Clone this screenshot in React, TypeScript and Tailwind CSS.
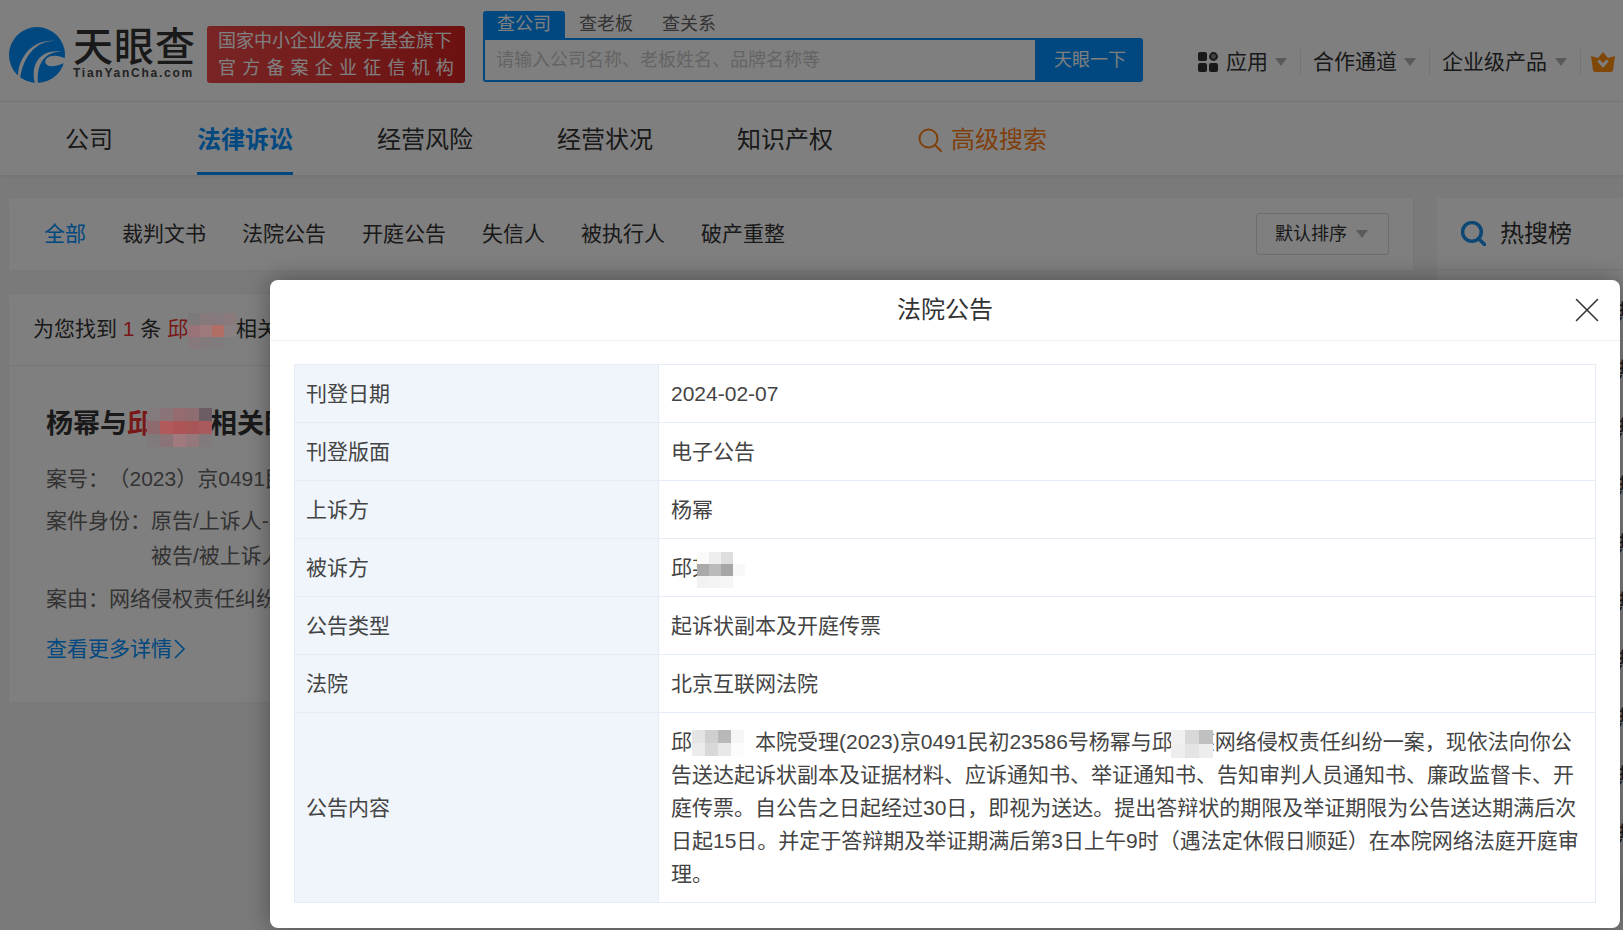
import React from 'react';
import { X } from 'lucide-react';

type MosaicProps = { x: number; y: number; size?: number; rows: string[][] };

// pixelated patches that hide names in the screenshot
const Mosaic: React.FC<MosaicProps> = ({ x, y, size = 12, rows }) => (
    <div className="absolute z-30" style={{ left: x, top: y }}>
        {rows.map((row, i) => (
            <div key={i} className="flex">
                {row.map((c, j) => (
                    <div key={j} style={{ width: size, height: size, background: c }} />
                ))}
            </div>
        ))}
    </div>
);

const Caret: React.FC<{ className?: string }> = ({ className }) => (
    <svg width="12" height="8" viewBox="0 0 12 8" className={className}>
        <path d="M0 0h12L6 8z" fill="#b4b4b4" />
    </svg>
);

const Logo: React.FC = () => (
    <svg width="56" height="56" viewBox="0 0 56 56" className="shrink-0">
        <circle cx="28" cy="28" r="28" fill="#0090ff" />
        <path d="M9 50C9 31 23 12 46 14C27 13 14 30 11 52Z" fill="#fff" />
        <path d="M26 56C21 38 31 20 55 25C38 23 27 35 29 56Z" fill="#fff" />
        <path d="M57 32C50 28 42 28 38 31C35 34 36 38 40 39C45 40 51 38 57 35Z" fill="#fff" />
    </svg>
);

const AppsIcon: React.FC = () => (
    <svg width="20" height="20" viewBox="0 0 20 20" className="shrink-0">
        <rect x="0" y="0" width="9" height="9" rx="2" fill="#333" />
        <circle cx="15.5" cy="4.5" r="3.4" fill="#888" stroke="#333" strokeWidth="2" />
        <rect x="0" y="11" width="9" height="9" rx="2" fill="#333" />
        <rect x="11" y="11" width="9" height="9" rx="2" fill="#333" />
    </svg>
);

const Crown: React.FC = () => (
    <svg width="24" height="20" viewBox="0 0 24 20" className="shrink-0">
        <path d="M12 0l5 6 7-2-2 14a2 2 0 0 1-2 2H4a2 2 0 0 1-2-2L0 4l7 2z" fill="#ff9010" />
        <path d="M7.5 8.5l4.5 5 4.5-5" fill="none" stroke="#fff" strokeWidth="3" />
    </svg>
);

const SearchGlyph: React.FC<{ color: string; stroke: number; size: number }> = ({ color, stroke, size }) => (
    <svg width={size} height={size} viewBox="0 0 24 24" className="shrink-0">
        <circle cx="10.5" cy="10.5" r="9" fill="none" stroke={color} strokeWidth={stroke} />
        <path d="M17 17l6 6" stroke={color} strokeWidth={stroke} strokeLinecap="round" />
    </svg>
);

const filters = ['裁判文书', '法院公告', '开庭公告', '失信人', '被执行人', '破产重整'];
const navItems = ['经营风险', '经营状况', '知识产权'];

const detailRows = [
    { label: '刊登日期', value: '2024-02-07' },
    { label: '刊登版面', value: '电子公告' },
    { label: '上诉方', value: '杨幂' },
    { label: '被诉方', value: '邱某某' },
    { label: '公告类型', value: '起诉状副本及开庭传票' },
    { label: '法院', value: '北京互联网法院' },
];

const App: React.FC = () => {
    return (
        <div className="relative w-[1623px] h-[930px] overflow-hidden bg-[#f5f5f5] text-[#333] font-['Liberation_Sans','Noto_Sans_CJK_SC',sans-serif]">
            {/* Header */}
            <div className="flex h-[102px] bg-white border-b border-[#ececec] pl-[9px]">
                <div className="flex mt-[27px] h-[56px]">
                    <Logo />
                    <div className="ml-[8px] w-[122px]">
                        <div className="text-[40px] leading-[40px] font-medium tracking-[1px] whitespace-nowrap text-[#333]">天眼查</div>
                        <div className="text-[12px] leading-[14px] font-bold tracking-[1.75px] whitespace-nowrap text-[#444] mt-[-1px]">TianYanCha.com</div>
                    </div>
                </div>
                <div className="ml-[12px] mt-[26px] w-[258px] h-[57px] rounded-[3px] bg-gradient-to-r from-[#f24a4a] to-[#d92020] text-white text-[18px] leading-[27px] flex flex-col justify-center px-[11px]">
                    <div className="whitespace-nowrap">国家中小企业发展子基金旗下</div>
                    <div className="whitespace-nowrap tracking-[6.2px]">官方备案企业征信机构</div>
                </div>
                <div className="ml-[18px] mt-[11px] w-[660px]">
                    <div className="flex h-[27px] text-[18px] leading-[27px]">
                        <div className="w-[82px] text-center bg-[#0090ff] text-white rounded-t-[3px]">查公司</div>
                        <div className="ml-[14px] text-[#666]">查老板</div>
                        <div className="ml-[29px] text-[#666]">查关系</div>
                    </div>
                    <div className="flex h-[44px]">
                        <div className="w-[554px] border-2 border-[#0090ff] rounded-bl-[3px] pl-[11px] text-[18px] leading-[40px] text-[#c8c8c8] whitespace-nowrap bg-white">请输入公司名称、老板姓名、品牌名称等</div>
                        <div className="w-[106px] bg-[#0090ff] rounded-r-[3px] text-white text-[18px] leading-[44px] text-center">天眼一下</div>
                    </div>
                </div>
                <div className="ml-[55px] mt-[49px] flex items-center h-[26px] text-[21px] text-[#333] whitespace-nowrap">
                    <AppsIcon />
                    <span className="ml-[8px]">应用</span>
                    <Caret className="ml-[7px]" />
                    <div className="ml-[13px] w-px h-[26px] bg-[#e8e8e8]" />
                    <span className="ml-[12px]">合作通道</span>
                    <Caret className="ml-[7px]" />
                    <div className="ml-[13px] w-px h-[26px] bg-[#e8e8e8]" />
                    <span className="ml-[12px]">企业级产品</span>
                    <Caret className="ml-[8px]" />
                    <div className="ml-[13px] w-px h-[26px] bg-[#e8e8e8]" />
                    <div className="ml-[10px]"><Crown /></div>
                </div>
            </div>

            {/* Main nav */}
            <div className="flex items-stretch h-[73px] bg-white pl-[65px] gap-[84px] text-[24px] text-[#333] shadow-[0_2px_4px_rgba(0,0,0,0.06)] whitespace-nowrap">
                <div className="flex items-center pt-[3px]">公司</div>
                <div className="flex items-center pt-[5px] font-bold text-[#0090ff] border-b-[3px] border-[#0090ff]">法律诉讼</div>
                {navItems.map((item) => (
                    <div key={item} className="flex items-center pt-[3px]">{item}</div>
                ))}
                <div className="flex items-center pt-[3px] ml-[1px] text-[#ff7f17]">
                    <SearchGlyph color="#ff7f17" stroke={2} size={24} />
                    <span className="ml-[9px]">高级搜索</span>
                </div>
            </div>

            {/* Page body */}
            <div className="flex pl-[9px] pt-[23px] gap-[24px]">
                <div className="w-[1404px] shrink-0">
                    <div className="flex items-center h-[72px] bg-white pl-[35px] pr-[24px] text-[21px] whitespace-nowrap shadow-[0_0_4px_rgba(0,0,0,0.04)]">
                        <span className="text-[#0090ff]">全部</span>
                        {filters.map((f) => (
                            <span key={f} className="ml-[36px]">{f}</span>
                        ))}
                        <div className="ml-auto flex items-center w-[133px] h-[42px] border border-[#dcdcdc] rounded-[3px] pl-[18px] text-[18px]">
                            默认排序
                            <Caret className="ml-[9px]" />
                        </div>
                    </div>

                    <div className="mt-[24px] h-[408px] bg-white shadow-[0_0_4px_rgba(0,0,0,0.04)]">
                        <div className="h-[72px] border-b border-[#ececec] flex items-center pl-[24px] pb-[2px] text-[21px] whitespace-nowrap">
                            为您找到&nbsp;<span className="text-[#f03030]">1</span>&nbsp;条&nbsp;<span className="text-[#f03030]">邱某某</span>&nbsp;相关的法律诉讼
                        </div>
                        <div className="pl-[37px] pt-[40px] text-[21px] text-[#666] whitespace-nowrap">
                            <div className="text-[27px] leading-[36px] font-bold text-[#333]">
                                杨幂与<span className="text-[#f03030]">邱某某</span><span className="ml-[2px]">相关网络侵权责任纠纷</span>
                            </div>
                            <div className="mt-[19px] leading-[36px]">案号：<span className="ml-[10px] tracking-[-7px]">（</span><span className="ml-[7px]">2023</span><span className="tracking-[-7px]">）</span><span className="ml-[7px]">京0491民初23586号</span></div>
                            <div className="mt-[6px] leading-[36px] flex">
                                <span>案件身份：</span>
                                <div>
                                    <div>原告/上诉人-杨幂</div>
                                    <div className="mt-[-1px]">被告/被上诉人-邱某某</div>
                                </div>
                            </div>
                            <div className="mt-[7px] leading-[36px]">案由：网络侵权责任纠纷</div>
                            <div className="mt-[14px] leading-[36px] text-[#0090ff] flex items-center">
                                查看更多详情
                                <svg width="12" height="20" viewBox="0 0 12 20" className="ml-[2px]">
                                    <path d="M1 1l9 9-9 9" fill="none" stroke="#0090ff" strokeWidth="1.6" />
                                </svg>
                            </div>
                        </div>
                    </div>
                </div>

                {/* Hot search panel, mostly behind the dialog */}
                <div className="w-[200px] shrink-0 h-[680px] bg-white">
                    <div className="flex items-center h-[72px] pl-[24px] border-b border-[#ececec] text-[24px] whitespace-nowrap">
                        <SearchGlyph color="#1a8fe8" stroke={3.4} size={25} />
                        <span className="ml-[14px]">热搜榜</span>
                    </div>
                    <div className="pt-[13px] pl-[180px] text-[21px] leading-[58px] whitespace-nowrap">
                        <div>热搜企业</div>
                        <div>热搜企业</div>
                        <div>热搜企业</div>
                        <div>热搜企业</div>
                        <div>热搜企业</div>
                        <div>热搜企业</div>
                        <div>热搜企业</div>
                        <div>热搜企业</div>
                        <div>热搜企业</div>
                        <div>热搜企业</div>
                    </div>
                </div>
            </div>

            {/* Dim layer */}
            <div className="absolute inset-0 z-10 bg-black/50" />

            {/* Dialog */}
            <div className="absolute z-20 left-[270px] top-[280px] w-[1350px] h-[648px] bg-white rounded-[8px] shadow-[0_0_24px_rgba(0,0,0,0.35)]">
                <div className="relative flex items-center justify-center h-[61px] border-b border-[#f0f0f0] text-[24px] text-[#333]">
                    法院公告
                    <X size={42} strokeWidth={0.9} className="absolute right-[12px] top-[9px] text-[#333]" />
                </div>
                <div className="pt-[23px] pl-[24px]">
                    <table className="w-[1302px] table-fixed border-collapse text-[21px] text-[#444]">
                        <colgroup>
                            <col className="w-[364px]" />
                            <col />
                        </colgroup>
                        <tbody>
                            {detailRows.map((row) => (
                                <tr key={row.label} className="h-[58px]">
                                    <td className="border border-[#e4edf5] bg-[#eff5fb] pl-[11px]">{row.label}</td>
                                    <td className="border border-[#e4edf5] pl-[12px]">{row.value}</td>
                                </tr>
                            ))}
                            <tr className="h-[190px]">
                                <td className="border border-[#e4edf5] bg-[#eff5fb] pl-[11px]">公告内容</td>
                                <td className="border border-[#e4edf5] px-[12px] leading-[33px]">
                                    邱某某：本院受理(2023)京0491民初23586号杨幂与邱某某网络侵权责任纠纷一案，现依法向你公告送达起诉状副本及证据材料、应诉通知书、举证通知书、告知审判人员通知书、廉政监督卡、开庭传票。自公告之日起经过30日，即视为送达。提出答辩状的期限及举证期限为公告送达期满后次日起15日。并定于答辩期及举证期满后第3日上午9时（遇法定休假日顺延）在本院网络法庭开庭审理。
                                </td>
                            </tr>
                        </tbody>
                    </table>
                </div>
            </div>

            {/* Name mosaics */}
            <Mosaic x={188} y={313} size={12} rows={[
                ['#7d7a7b', '#86797c', '#84797c', '#8a7a7c'],
                ['#9a7378', '#9e7a7c', '#b06e64', '#8a8082'],
                ['#85797b', '#82797b', '#807b7c', '#7f7e7e'],
            ]} />
            <Mosaic x={147} y={408} size={13} rows={[
                ['#827a7c', '#8a7478', '#946c70', '#8e6c70', '#6c5c64'],
                ['#8e6a6e', '#b05a5c', '#ac5456', '#a85558', '#a85a5c'],
                ['#807a7c', '#8a7478', '#a07a7e', '#94787c', '#807a7c'],
            ]} />
            <Mosaic x={697} y={552} size={12} rows={[
                ['#fafafa', '#eeeeee', '#dedede', '#ffffff'],
                ['#aaaaaa', '#bbbbbb', '#a6a6a6', '#f8f8f8'],
                ['#f2f2f2', '#f4f4f4', '#f6f6f6', '#ffffff'],
            ]} />
            <Mosaic x={692} y={730} size={13} rows={[
                ['#e4e4e4', '#cfcfcf', '#b8b8b8', '#f6f6f6'],
                ['#ececec', '#d8d8d8', '#e8e8e8', '#fcfcfc'],
            ]} />
            <Mosaic x={1171} y={730} size={14} rows={[
                ['#f0f0f0', '#d8d8d8', '#c0c0c0'],
                ['#eeeeee', '#e4e4e4', '#ededed'],
            ]} />
        </div>
    );
};

export default App;
